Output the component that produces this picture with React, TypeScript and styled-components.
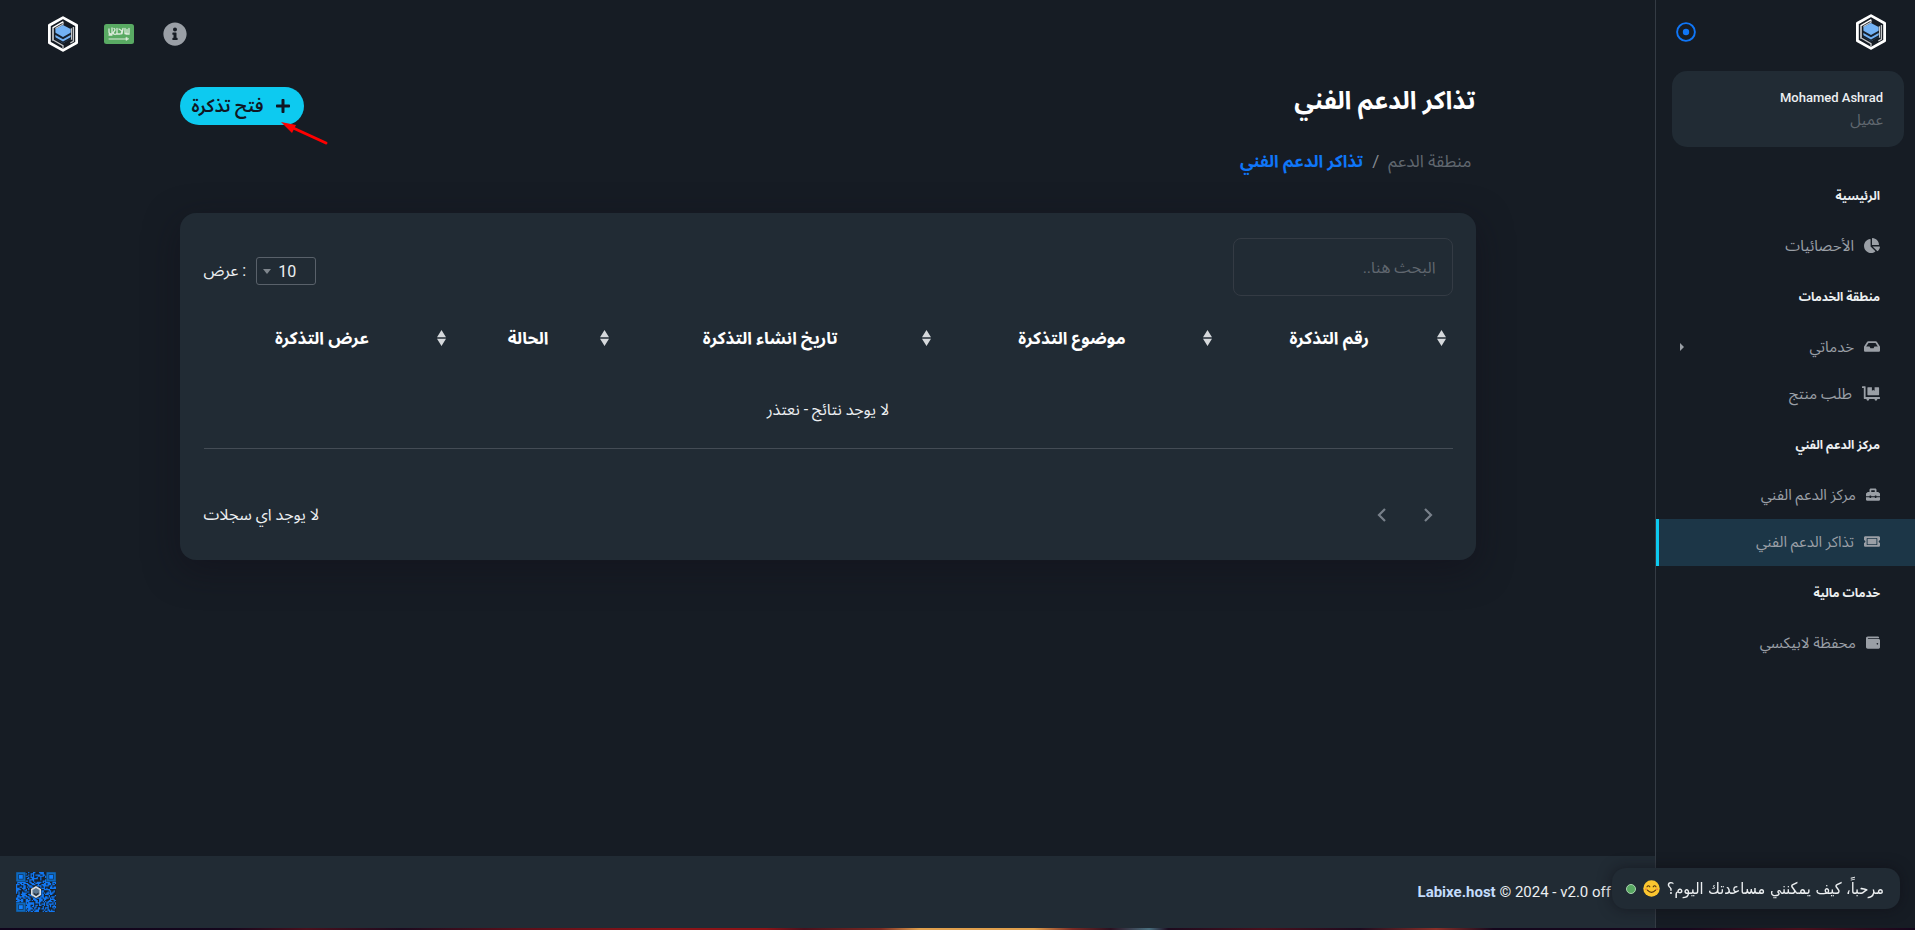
import React from 'react';
import styled, { createGlobalStyle } from 'styled-components';
import {
  FaChartPie,
  FaDollyFlatbed,
  FaInbox,
  FaInfoCircle,
  FaPlus,
  FaTicketAlt,
  FaToolbox,
  FaWallet,
} from 'react-icons/fa';

const color = {
  page: '#161c24',
  panel: '#212b34',
  line: '#343b44',
  primary: '#0f76f8',
  info: '#0dcaf0',
  text: '#eceff1',
  muted: '#9a9fa6',
  faint: '#60676f',
};

const GlobalStyle = createGlobalStyle`
  * { box-sizing: border-box; }
  body {
    margin: 0;
    background: ${color.page};
    color: ${color.text};
    font: 16px/24px Roboto, "Noto Sans Arabic", "DejaVu Sans Condensed", sans-serif;
  }
  button, input, select { font: inherit; color: inherit; }
  button { padding: 0; border: 0; background: none; cursor: pointer; }
  a { color: inherit; text-decoration: none; }
`;

const Screen = styled.div`
  display: flex;
  flex-direction: column;
  min-height: 100vh;
`;

const Shell = styled.div`
  display: flex;
  flex: 1;
`;

const BottomStrip = styled.div`
  height: 2px;
  background: linear-gradient(
    to right,
    #10041c 0%, #14061c 12%, #4a0f1c 16%, #1c0a1e 21%, #5a0f1a 27%, #8c1418 35%, #8c1418 40%,
    #4a101c 42%, #7a2a22 46%, #e0a04e 48%, #e0a04e 54%, #7c2a24 56%, #2c1020 58%, #4a7080 60%,
    #1c0a1e 61%, #4a0f1c 66%, #1c0a1e 71%, #8a2f28 75%, #14061c 78%, #14061c 88%, #4a0f1c 94%, #14061c 100%
  );
`;

/* ---------- Sidebar ---------- */

const Sidebar = styled.aside`
  width: 260px;
  flex: none;
  border-left: 1px solid ${color.line};
`;

const Brand = styled.div`
  display: flex;
  align-items: center;
  justify-content: space-between;
  height: 71px;
  padding: 0 29px 8px 16px;

  svg { display: block; }
`;

const UserCard = styled.section`
  height: 76px;
  margin: 0 11px 22px 16px;
  padding: 15px 21px;
  border-radius: 15px;
  background: ${color.panel};
  line-height: 23px;
`;

const UserName = styled.div`
  font-size: 13px;
  font-weight: 500;
`;

const UserRole = styled.div`
  color: ${color.faint};
  font-size: 15px;
`;

const NavHeading = styled.h2`
  display: flex;
  align-items: center;
  height: 54px;
  margin: 0;
  padding: 0 35px;
  font-size: 12px;
  font-weight: 700;
`;

const NavLink = styled.a<{ $active?: boolean }>`
  display: flex;
  align-items: center;
  gap: 10px;
  height: 47px;
  padding: 0 35px 2px 21px;
  border-left: 3px solid ${(p) => (p.$active ? color.info : 'transparent')};
  background: ${(p) => (p.$active ? '#1c3647' : 'transparent')};
  color: ${color.muted};
  font-size: 15px;
`;

const NavIcon = styled.span<{ $width: number }>`
  flex: none;
  width: ${(p) => p.$width}px;

  svg {
    display: block;
    width: 100%;
    height: 15px;
  }
`;

const Caret = styled.span`
  margin-right: auto;
  border: 4px solid transparent;
  border-left-color: ${color.muted};
  border-right-width: 0;
`;

/* ---------- Main area ---------- */

const Main = styled.main`
  display: flex;
  flex: 1;
  flex-direction: column;
  min-width: 0;
`;

const TopBar = styled.header`
  display: flex;
  align-items: center;
  justify-content: flex-end;
  gap: 26px;
  height: 68px;
  padding: 0 48px;
`;

const IconButton = styled.button`
  display: grid;
  place-items: center;
  color: ${color.muted};

  svg { display: block; }
`;

const InfoButton = styled(IconButton)`
  width: 30px;
`;

const Content = styled.div`
  width: 100%;
  max-width: 1320px;
  margin: 0 auto;
  padding: 19px 12px 40px;
`;

const TitleRow = styled.div`
  display: flex;
  align-items: flex-start;
  justify-content: space-between;
  height: 62px;
`;

const Title = styled.h1`
  margin: 0;
  font-size: 25px;
  line-height: 28px;
  color: #fff;
`;

const OpenTicket = styled.button`
  position: relative;
  display: flex;
  align-items: center;
  gap: 12px;
  height: 38px;
  padding: 0 13px 0 12px;
  border-radius: 19px;
  background: ${color.info};
  color: #101623;
  font-size: 18px;
  font-weight: 600;
`;

const Pointer = styled.svg`
  position: absolute;
  top: 34px;
  left: 100px;
`;

const Breadcrumb = styled.nav`
  display: flex;
  gap: 9px;
  margin-bottom: 40px;
  padding: 0 4px;
  color: ${color.faint};
  font-size: 17px;
`;

const CurrentCrumb = styled.a`
  color: ${color.primary};
  font-weight: 700;
`;

const Slash = styled.span`
  color: #868b92;
`;

const Card = styled.section`
  padding: 25px 23px 33px 24px;
  border-radius: 16px;
  background: ${color.panel};
  box-shadow: 0 10px 34px rgba(18, 14, 26, 0.5);
`;

const Toolbar = styled.div`
  display: flex;
  align-items: flex-end;
  justify-content: space-between;
`;

const Search = styled.input`
  width: 220px;
  height: 58px;
  padding: 0 16px;
  border: 1px solid ${color.line};
  border-radius: 8px;
  background: transparent;
  outline: 0;

  &::placeholder {
    color: ${color.faint};
    opacity: 1;
  }
`;

const PageLength = styled.label`
  display: flex;
  align-items: center;
  gap: 10px;
  padding-bottom: 11px;
`;

const SelectFrame = styled.span`
  display: grid;
  align-items: center;
  width: 60px;
`;

const Select = styled.select`
  grid-area: 1 / 1;
  width: 100%;
  height: 28px;
  padding: 2px 19px 0;
  border: 1px solid #59616a;
  border-radius: 3px;
  background: transparent;
  line-height: 20px;
  appearance: none;
  outline: 0;
`;

const SelectArrow = styled.span`
  grid-area: 1 / 1;
  justify-self: end;
  margin-left: 7px;
  border: 4px solid transparent;
  border-top: 5px solid #7f868d;
  border-bottom-width: 0;
  pointer-events: none;
`;

const Table = styled.table`
  width: 100%;
  margin-top: 22px;
  border-collapse: collapse;
  table-layout: fixed;
`;

const HeadCell = styled.th<{ $share: number }>`
  width: ${(p) => p.$share}%;
  height: 40px;
  padding: 0 7px;
  color: #fff;
`;

const SortButton = styled.button`
  display: flex;
  align-items: center;
  gap: 4px;
  width: 100%;
  font-size: 17px;
  font-weight: 700;
`;

const SortLabel = styled.span`
  flex: 1;
  text-align: center;
`;

const EmptyCell = styled.td`
  padding: 40px 0 26px;
  border-bottom: 1px solid #444c55;
  text-align: center;
`;

const CardFooter = styled.div`
  display: flex;
  align-items: center;
  justify-content: space-between;
  padding-top: 54px;
`;

const Pager = styled.div`
  display: flex;
  gap: 30px;
  padding-right: 17px;
  color: #78808a;
`;

const PagerButton = styled.button`
  width: 16px;
  height: 24px;

  svg { display: block; }
`;

const PageFooter = styled.footer`
  display: flex;
  align-items: center;
  justify-content: space-between;
  height: 72px;
  margin-top: auto;
  padding: 0 44px 0 16px;
  background: ${color.panel};
  font-size: 15px;
`;

const HostLink = styled.a`
  color: #c3dcfb;
  font-weight: 700;
`;

const ChatBubble = styled.button`
  position: fixed;
  right: 15px;
  bottom: 21px;
  display: flex;
  align-items: center;
  gap: 7px;
  height: 41px;
  padding: 0 16px 0 14px;
  border-radius: 14px;
  background: ${color.panel};
  box-shadow: 0 0 14px rgba(14, 12, 20, 0.55);
  font-family: "DejaVu Sans Condensed", sans-serif;

  svg { flex: none; }
`;

const StatusDot = styled.span`
  width: 10px;
  height: 10px;
  border: 1px solid #a9d3ae;
  border-radius: 50%;
  background: #58a862;
`;

/* ---------- Drawings ---------- */

function Logo() {
  return (
    <svg height="36" width="30" viewBox="0 0 30 36" aria-hidden="true">
      <g fill="none" stroke="#fff">
        <path d="M15 1.6 28.6 9.3v17.4L15 34.4 1.4 26.7V9.3z" strokeWidth="2.8" strokeLinejoin="round" />
        <path d="M5 11.5v13.2M4.6 11.9 15 5.9" strokeWidth="1.3" />
        <path d="M7.4 12.6 15 8.2V5.4M5.6 24.2 15 29.6v3M25.4 11v14.2l-3 1.7M23.4 12.2v11.6" strokeWidth="1.3" opacity=".75" />
      </g>
      <path d="M15 8.9 22.6 13v9.8L15 27.2l-7.6-4.4V13z" fill="#73b2f5" />
      <path d="m7 16.4 8 4.5 8-4.5v2.4l-8 4.5-8-4.500zM7 21l8 4.400 8-4.400v1.900l-8 4.400-8-4.400z" fill="#18222f" />
    </svg>
  );
}

function SaudiFlag() {
  return (
    <svg width="30" height="20" viewBox="0 0 30 20" aria-hidden="true">
      <rect width="30" height="20" rx="2.5" fill="#59aa63" />
      <g fill="none" stroke="#dcebdc" strokeWidth="1.3" strokeLinecap="round">
        <path d="M5 5v3q0 2 2 2M8 4v6M10 4.5q2 1 0 3t1 3M13 4.5v5M12 10h4M15 5l3 2-1 3M19 4.5l-1 5M21 4.5v5h2v-4M25 4.5v5.5h-3M5 11h3" />
        <path d="M5 15h18" strokeWidth="1" />
        <path d="M22 13.5v3l2.5-1.5z" fill="#dcebdc" strokeWidth=".6" />
      </g>
    </svg>
  );
}

function Smile() {
  return (
    <svg width="17" height="17" viewBox="0 0 17 17" aria-hidden="true">
      <circle cx="8.5" cy="8.5" r="8.2" fill="#fcc62f" />
      <g fill="none" stroke="#54330d" strokeLinecap="round" strokeWidth="1.1">
        <path d="M4 6.8q1.4-2 2.8 0M10.2 6.8q1.4-2 2.8 0M4.4 10.2q4.1 4.4 8.2 0" />
      </g>
      <path d="M2 9.2h2M13 9.2h2" stroke="#f08a3c" strokeWidth="1.6" />
    </svg>
  );
}

function SortIcon() {
  return (
    <svg width="9" height="16" viewBox="0 0 9 16" fill="#d5d8db" aria-hidden="true">
      <path d="M4.5 0 9 7.3H0zM4.5 16 9 8.7H0z" />
    </svg>
  );
}

const QR_SIZE = 33;

function qrCells() {
  const cells: string[] = [];
  let seed = 20240;
  for (let y = 0; y < QR_SIZE; y += 1) {
    for (let x = 0; x < QR_SIZE; x += 1) {
      seed = (seed * 1103515245 + 12345) % 2147483648;
      const nearLeft = x < 8;
      const nearRight = x > QR_SIZE - 9;
      const inFinder = (y < 8 && (nearLeft || nearRight)) || (y > QR_SIZE - 9 && nearLeft);
      const inLogo = Math.hypot(x - 16, y - 16) < 5;
      if (!inFinder && !inLogo && seed / 2147483648 > 0.42) cells.push(`M${x} ${y}h1v1h-1z`);
    }
  }
  return cells.join('');
}

const QR_PATH = qrCells();

function QrCode() {
  return (
    <svg width="40" height="40" viewBox="0 0 33 33" role="img" aria-label="QR">
      <rect width="33" height="33" fill="#17222f" />
      <path d={QR_PATH} fill="#1177f2" />
      {[[0, 0], [25, 0], [0, 25]].map(([x, y]) => (
        <g key={`${x}-${y}`} transform={`translate(${x} ${y})`}>
          <rect x="1" y="1" width="6" height="6" fill="#17304d" stroke="#0f69bd" strokeWidth="1.7" />
          <rect x="2.4" y="2.4" width="3.2" height="3.2" fill="#1280ff" />
        </g>
      ))}
      <path d="m16.5 12.4 3.5 2v4.2l-3.500 2-3.500-2v-4.200z" fill="#5f7890" stroke="#d9dde0" strokeWidth="1.3" />
      <path d="m14.6 17 2 1.2 2-1.2v1.500l-2 1.200-2-1.200z" fill="#2a3441" />
    </svg>
  );
}

/* ---------- Content ---------- */

type Item = {
  label: string;
  icon: React.ReactNode;
  iconWidth: number;
  active?: boolean;
  expandable?: boolean;
};

const navigation: { heading: string; items: Item[] }[] = [
  {
    heading: 'الرئيسية',
    items: [{ label: 'الأحصائيات', icon: <FaChartPie />, iconWidth: 16 }],
  },
  {
    heading: 'منطقة الخدمات',
    items: [
      { label: 'خدماتي', icon: <FaInbox />, iconWidth: 16, expandable: true },
      { label: 'طلب منتج', icon: <FaDollyFlatbed />, iconWidth: 18 },
    ],
  },
  {
    heading: 'مركز الدعم الفني',
    items: [
      { label: 'مركز الدعم الفني', icon: <FaToolbox />, iconWidth: 14 },
      { label: 'تذاكر الدعم الفني', icon: <FaTicketAlt />, iconWidth: 16, active: true },
    ],
  },
  {
    heading: 'خدمات مالية',
    items: [{ label: 'محفظة لابيكسي', icon: <FaWallet />, iconWidth: 14 }],
  },
];

const columns = [
  { label: 'رقم التذكرة', share: 18.7 },
  { label: 'موضوع التذكرة', share: 22.5 },
  { label: 'تاريخ انشاء التذكرة', share: 25.8 },
  { label: 'الحالة', share: 13 },
  { label: 'عرض التذكرة', share: 20 },
];

export default function App() {
  return (
    <Screen dir="rtl" lang="ar">
      <GlobalStyle />
      <Shell>
        <Sidebar>
          <Brand>
            <a href="#home" aria-label="Labixe">
              <Logo />
            </a>
            <IconButton aria-label="تثبيت القائمة">
              <svg width="28" height="20" viewBox="-4 0 28 20">
                <circle cx="10" cy="10" r="8.9" fill="none" stroke={color.primary} strokeWidth="1.9" />
                <circle cx="10" cy="10" r="3.2" fill={color.primary} />
              </svg>
            </IconButton>
          </Brand>
          <UserCard>
            <UserName>Mohamed Ashrad</UserName>
            <UserRole>عميل</UserRole>
          </UserCard>
          <nav>
            {navigation.map((group) => (
              <React.Fragment key={group.heading}>
                <NavHeading>{group.heading}</NavHeading>
                {group.items.map((item) => (
                  <NavLink key={item.label} href="#" $active={item.active}>
                    <NavIcon $width={item.iconWidth}>{item.icon}</NavIcon>
                    {item.label}
                    {item.expandable && <Caret />}
                  </NavLink>
                ))}
              </React.Fragment>
            ))}
          </nav>
        </Sidebar>

        <Main>
          <TopBar>
            <InfoButton aria-label="معلومات">
              <FaInfoCircle size={24} />
            </InfoButton>
            <IconButton aria-label="العربية">
              <SaudiFlag />
            </IconButton>
            <IconButton aria-label="الحساب">
              <Logo />
            </IconButton>
          </TopBar>

          <Content>
            <TitleRow>
              <Title>تذاكر الدعم الفني</Title>
              <OpenTicket>
                <FaPlus size={16} />
                فتح تذكرة
                <Pointer width="50" height="26" viewBox="0 0 50 26" aria-hidden="true">
                  <path d="M11 6 46 22" stroke="#fe0000" strokeWidth="3" strokeLinecap="round" />
                  <path d="M1 1 16 4 12 12z" fill="#fe0000" />
                </Pointer>
              </OpenTicket>
            </TitleRow>
            <Breadcrumb>
              <a href="#support">منطقة الدعم</a>
              <Slash>/</Slash>
              <CurrentCrumb href="#tickets">تذاكر الدعم الفني</CurrentCrumb>
            </Breadcrumb>

            <Card>
              <Toolbar>
                <Search type="search" placeholder="البحث هنا.." aria-label="البحث" />
                <PageLength>
                  <SelectFrame>
                    <Select defaultValue="10">
                      <option>10</option>
                      <option>25</option>
                      <option>50</option>
                    </Select>
                    <SelectArrow />
                  </SelectFrame>
                  : عرض
                </PageLength>
              </Toolbar>

              <Table>
                <thead>
                  <tr>
                    {columns.map((column) => (
                      <HeadCell key={column.label} $share={column.share} scope="col">
                        <SortButton>
                          <SortIcon />
                          <SortLabel>{column.label}</SortLabel>
                        </SortButton>
                      </HeadCell>
                    ))}
                  </tr>
                </thead>
                <tbody>
                  <tr>
                    <EmptyCell colSpan={columns.length}>لا يوجد نتائج - نعتذر</EmptyCell>
                  </tr>
                </tbody>
              </Table>

              <CardFooter>
                <Pager>
                  <PagerButton aria-label="السابق">
                    <svg width="16" height="24" viewBox="0 0 16 24" fill="none" stroke="currentColor" strokeWidth="2.2">
                      <path d="m5 6 6 6-6 6" />
                    </svg>
                  </PagerButton>
                  <PagerButton aria-label="التالي">
                    <svg width="16" height="24" viewBox="0 0 16 24" fill="none" stroke="currentColor" strokeWidth="2.2">
                      <path d="m11 6-6 6 6 6" />
                    </svg>
                  </PagerButton>
                </Pager>
                <span>لا يوجد اي سجلات</span>
              </CardFooter>
            </Card>
          </Content>

          <PageFooter>
            <span dir="ltr">
              <HostLink href="#labixe">Labixe.host</HostLink> © 2024 - v2.0 off
            </span>
            <QrCode />
          </PageFooter>
        </Main>
      </Shell>
      <BottomStrip />
      <ChatBubble>
        <span>مرحباً، كيف يمكنني مساعدتك اليوم؟</span>
        <Smile />
        <StatusDot />
      </ChatBubble>
    </Screen>
  );
}
